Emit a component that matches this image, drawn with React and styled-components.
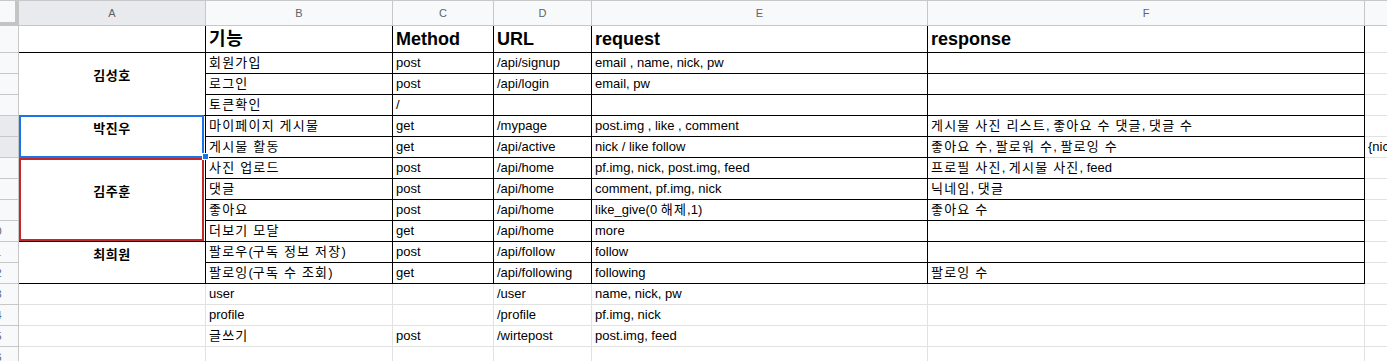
import React from 'react';
import styled, { createGlobalStyle, css } from 'styled-components';

const GlobalStyle = createGlobalStyle`
  html, body { margin: 0; padding: 0; background: #fff; overflow: hidden; }
  body { font-family: "Liberation Sans", Arial, "Noto Sans CJK KR", sans-serif; }
`;

const COLS = ['A', 'B', 'C', 'D', 'E', 'F', 'G'];
const WIDTHS = [187, 187, 101, 98, 336, 437, 120];

const GRID = '#e2e2e2';
const HEAD_LINE = '#c7c7c7';

const Sheet = styled.div`
  display: grid;
  grid-template-columns: 19px ${WIDTHS.map((w) => `${w}px`).join(' ')};
  grid-template-rows: 25px 27px repeat(15, 21px);
  width: 1387px;
  border-top: 1px solid ${HEAD_LINE};
  overflow: hidden;
  box-sizing: border-box;
`;

const Corner = styled.div`
  grid-row: 1;
  grid-column: 1;
  box-sizing: border-box;
  background: #f8f9fa;
  border-right: 4px solid #c4c4c4;
  border-bottom: 4px solid #c4c4c4;
`;

const ColHeader = styled.div`
  grid-row: 1;
  grid-column: ${(p) => p.$col + 2};
  box-sizing: border-box;
  background: ${(p) => (p.$active ? '#e8eaed' : '#f8f9fa')};
  border-right: 1px solid ${HEAD_LINE};
  border-bottom: 1px solid ${HEAD_LINE};
  display: flex;
  align-items: center;
  justify-content: center;
  font-size: 11px;
  color: #5f6368;
`;

/* $row is the sheet row number (1 = title row) */
const RowHeader = styled.div`
  grid-row: ${(p) => p.$row + 1};
  grid-column: 1;
  box-sizing: border-box;
  background: ${(p) => (p.$active ? '#e8eaed' : '#f8f9fa')};
  border-right: 1px solid ${HEAD_LINE};
  border-bottom: 1px solid ${HEAD_LINE};
  display: flex;
  align-items: center;
  justify-content: flex-end;
  overflow: hidden;
  font-size: 11px;
  color: #5f6368;
`;

const RowNum = styled.span`
  flex: 0 0 45px;
  text-align: center;
`;

const Cell = styled.div`
  grid-row: ${(p) => p.$row + 1} / span ${(p) => p.$span || 1};
  grid-column: ${(p) => p.$col + 2};
  box-sizing: border-box;
  border-right: 1px solid ${(p) => (p.$boxed ? '#000' : GRID)};
  border-bottom: 1px solid ${(p) => (p.$boxed ? '#000' : GRID)};
  display: flex;
  align-items: flex-end;
  padding: 0 3px 2px 3px;
  font-size: 13px;
  line-height: 16px;
  color: #000;
  white-space: pre;
  min-width: 0;
  ${(p) =>
    p.$title &&
    css`
      font-size: 18px;
      font-weight: bold;
      line-height: 22px;
      padding-bottom: 2px;
    `}
`;

const Hangul = styled.span`
  letter-spacing: ${(p) => (p.$bold ? '0.6px' : '1.2px')};
`;

const SEL = { blue: '#1a73e8', red: '#c62828' };

const NameCell = styled(Cell)`
  position: relative;
  align-items: center;
  justify-content: center;
  padding-bottom: 16px;
  font-weight: bold;
  ${(p) =>
    p.$sel &&
    css`
      &::after {
        content: '';
        position: absolute;
        top: ${p.$sel === 'blue' ? '-1px' : '0'};
        bottom: ${p.$sel === 'blue' ? '-1px' : '0'};
        left: 0;
        right: 1px;
        border: 2px solid ${SEL[p.$sel]};
        z-index: 2;
        pointer-events: none;
      }
    `}
`;

const FillHandle = styled.span`
  position: absolute;
  right: -4px;
  bottom: -3px;
  width: 7px;
  height: 7px;
  box-sizing: border-box;
  background: #1a73e8;
  border: 1px solid #fff;
  z-index: 3;
`;

const Text = ({ children, bold }) => {
  if (!children) return null;
  const parts = String(children).split(/([\uAC00-\uD7A3][\uAC00-\uD7A3 ]*[\uAC00-\uD7A3]|[\uAC00-\uD7A3])/);
  return (
    <span>
      {parts.map((p, i) =>
        /[\uAC00-\uD7A3]/.test(p) ? (
          <Hangul key={i} $bold={bold}>
            {p}
          </Hangul>
        ) : (
          p
        )
      )}
    </span>
  );
};

const HEAD = ['기능', 'Method', 'URL', 'request', 'response'];

const ROWS = [
  ['회원가입', 'post', '/api/signup', 'email , name, nick, pw', ''],
  ['로그인', 'post', '/api/login', 'email, pw', ''],
  ['토큰확인', '/', '', '', ''],
  ['마이페이지 게시물', 'get', '/mypage', 'post.img , like , comment', '게시물 사진 리스트, 좋아요 수 댓글, 댓글 수'],
  ['게시물 활동', 'get', '/api/active', 'nick / like follow', '좋아요 수, 팔로워 수, 팔로잉 수', '{nick'],
  ['사진 업로드', 'post', '/api/home', 'pf.img, nick, post.img, feed', '프로필 사진, 게시물 사진, feed'],
  ['댓글', 'post', '/api/home', 'comment, pf.img, nick', '닉네임, 댓글'],
  ['좋아요', 'post', '/api/home', 'like_give(0 해제,1)', '좋아요 수'],
  ['더보기 모달', 'get', '/api/home', 'more', ''],
  ['팔로우(구독 정보 저장)', 'post', '/api/follow', 'follow', ''],
  ['팔로잉(구독 수 조회)', 'get', '/api/following', 'following', '팔로잉 수'],
  ['user', '', '/user', 'name, nick, pw', ''],
  ['profile', '', '/profile', 'pf.img, nick', ''],
  ['글쓰기', 'post', '/wirtepost', 'post.img, feed', ''],
  ['', '', '', '', ''],
];

const NAMES = [
  { row: 2, span: 3, name: '김성호' },
  { row: 5, span: 2, name: '박진우', sel: 'blue' },
  { row: 7, span: 4, name: '김주훈', sel: 'red' },
  { row: 11, span: 2, name: '최희원' },
];

const LAST_BOXED = 12;
const SELECTED_ROWS = [5, 6];

export default function App() {
  const cells = [];

  cells.push(<Cell key="A1" $row={1} $col={0} $boxed />);
  HEAD.forEach((t, i) => {
    cells.push(
      <Cell key={`h${i}`} $row={1} $col={i + 1} $boxed $title>
        <Text bold>{t}</Text>
      </Cell>
    );
  });
  cells.push(<Cell key="G1" $row={1} $col={6} />);

  ROWS.forEach((r, idx) => {
    const row = idx + 2;
    const boxed = row <= LAST_BOXED;
    if (!boxed) cells.push(<Cell key={`A${row}`} $row={row} $col={0} />);
    for (let c = 0; c < 5; c++) {
      cells.push(
        <Cell key={`${COLS[c + 1]}${row}`} $row={row} $col={c + 1} $boxed={boxed}>
          <Text>{r[c]}</Text>
        </Cell>
      );
    }
    cells.push(
      <Cell key={`G${row}`} $row={row} $col={6}>
        <Text>{r[5] || ''}</Text>
      </Cell>
    );
  });

  NAMES.forEach((n) => {
    cells.push(
      <NameCell key={n.name} $row={n.row} $span={n.span} $col={0} $boxed $sel={n.sel}>
        <Text bold>{n.name}</Text>
        {n.sel === 'blue' && <FillHandle />}
      </NameCell>
    );
  });

  return (
    <>
      <GlobalStyle />
      <Sheet>
        <Corner />
        {COLS.map((c, i) => (
          <ColHeader key={c} $col={i} $active={c === 'A'}>
            {c}
          </ColHeader>
        ))}
        {Array.from({ length: 16 }, (_, i) => (
          <RowHeader key={i} $row={i + 1} $active={SELECTED_ROWS.includes(i + 1)}>
            <RowNum>{i + 1}</RowNum>
          </RowHeader>
        ))}
        {cells}
      </Sheet>
    </>
  );
}
